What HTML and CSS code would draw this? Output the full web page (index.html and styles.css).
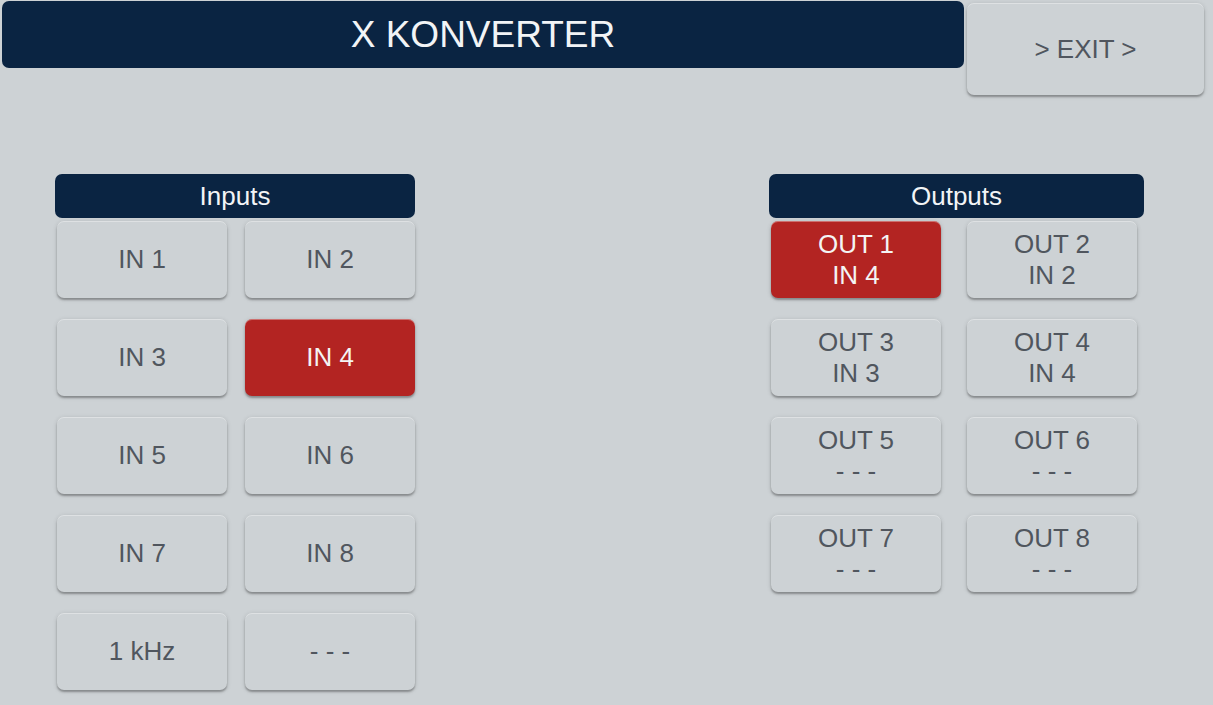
FILE: index.html
```html
<!DOCTYPE html>
<html>
<head>
<meta charset="utf-8">
<link rel="stylesheet" href="styles.css">
</head>
<body>
<div class="screen">
  <div class="top">
    <div class="title">X KONVERTER</div>
    <div class="btn exit">&gt; EXIT &gt;</div>
  </div>
  <div class="main">
    <div class="panel inputs">
      <div class="header">Inputs</div>
      <div class="grid in-grid">
        <div class="btn">IN 1</div>
        <div class="btn">IN 2</div>
        <div class="btn">IN 3</div>
        <div class="btn active">IN 4</div>
        <div class="btn">IN 5</div>
        <div class="btn">IN 6</div>
        <div class="btn">IN 7</div>
        <div class="btn">IN 8</div>
        <div class="btn">1 kHz</div>
        <div class="btn">- - -</div>
      </div>
    </div>
    <div class="panel outputs">
      <div class="header">Outputs</div>
      <div class="grid out-grid">
        <div class="btn active two">OUT 1<br>IN 4</div>
        <div class="btn two">OUT 2<br>IN 2</div>
        <div class="btn two">OUT 3<br>IN 3</div>
        <div class="btn two">OUT 4<br>IN 4</div>
        <div class="btn two">OUT 5<br>- - -</div>
        <div class="btn two">OUT 6<br>- - -</div>
        <div class="btn two">OUT 7<br>- - -</div>
        <div class="btn two">OUT 8<br>- - -</div>
      </div>
    </div>
  </div>
</div>
</body>
</html>
```
FILE: styles.css
```css
* { box-sizing: border-box; }
html, body {
  margin: 0;
  padding: 0;
  background: #cdd2d5;
  font-family: "Liberation Sans", Arial, sans-serif;
}
.screen {
  width: 1213px;
  height: 705px;
  overflow: hidden;
}
.top {
  display: flex;
  align-items: flex-start;
  padding: 1px 0 0 2px;
}
.title {
  width: 962px;
  height: 67px;
  background: #0a2442;
  border-radius: 7px;
  color: #f2f4f6;
  font-size: 37px;
  display: flex;
  align-items: center;
  justify-content: center;
}
.btn {
  background: #cdd2d5;
  border-radius: 7px;
  color: #50565e;
  font-size: 26px;
  display: flex;
  align-items: center;
  justify-content: center;
  text-align: center;
  box-shadow: 0 2px 2px rgba(0,0,0,0.28), 0 1px 5px rgba(0,0,0,0.14), inset 0 1px 0 rgba(255,255,255,0.35);
}
.exit {
  width: 237px;
  height: 92px;
  margin: 2px 0 0 3px;
}
.main {
  display: flex;
  padding: 79px 0 0 55px;
}
.panel { display: flex; flex-direction: column; }
.header {
  height: 44px;
  background: #0a2442;
  border-radius: 7px;
  color: #f2f4f6;
  font-size: 26px;
  display: flex;
  align-items: center;
  justify-content: center;
}
.inputs { width: 360px; }
.outputs { width: 375px; margin-left: 354px; }
.grid {
  display: grid;
  grid-template-columns: 170px 170px;
  grid-auto-rows: 77px;
  row-gap: 21px;
  margin: 3px 0 0 2px;
}
.in-grid { column-gap: 18px; }
.out-grid { column-gap: 26px; }
.btn.two { line-height: 31px; }
.btn.active {
  background: #b32422;
  color: #f4f4f4;
}
```
